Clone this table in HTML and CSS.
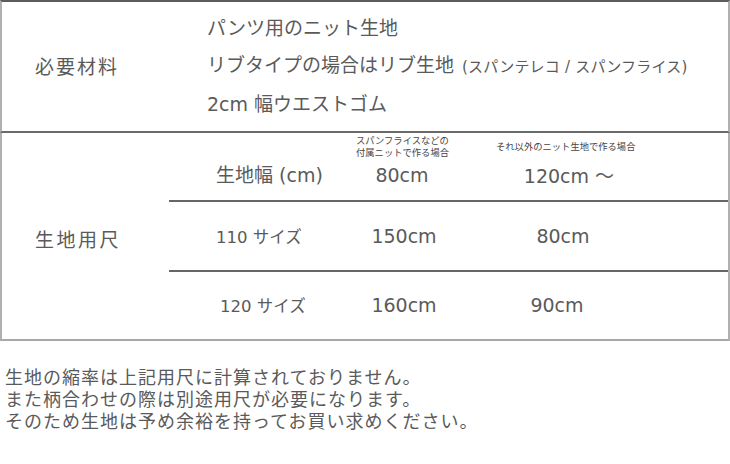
FILE: index.html
```html
<!DOCTYPE html>
<html lang="ja">
<head>
<meta charset="utf-8">
<link rel="stylesheet" href="styles.css">
</head>
<body>
<div class="spec">
  <section class="materials">
    <div class="label">必要材料</div>
    <ul class="list">
      <li>パンツ用のニット生地</li>
      <li>リブタイプの場合はリブ生地<span class="sub">(スパンテレコ / スパンフライス)</span></li>
      <li>2cm 幅ウエストゴム</li>
    </ul>
  </section>
  <section class="sizes">
    <div class="label">生地用尺</div>
    <div class="rows">
      <div class="row head">
        <span class="note note-a">スパンフライスなどの<br>付属ニットで作る場合</span>
        <span class="note note-b">それ以外のニット生地で作る場合</span>
        <div class="c1">生地幅 (cm)</div>
        <div class="c2">80cm</div>
        <div class="c3 shift-r">120cm ～</div>
      </div>
      <div class="row">
        <div class="c1 size">110 サイズ</div>
        <div class="c2">150cm</div>
        <div class="c3">80cm</div>
      </div>
      <div class="row">
        <div class="c1 size shift-b">120 サイズ</div>
        <div class="c2">160cm</div>
        <div class="c3 shift-l">90cm</div>
      </div>
    </div>
  </section>
  <p class="footnote">生地の縮率は上記用尺に計算されておりません。<br>また柄合わせの際は別途用尺が必要になります。<br>そのため生地は予め余裕を持ってお買い求めください。</p>
</div>
</body>
</html>
```
FILE: styles.css
```css
* { box-sizing: border-box; }
html, body { margin: 0; padding: 0; background: #fff; }
body {
  width: 730px;
  font-family: "DejaVu Sans", "Noto Sans CJK JP", sans-serif;
  color: #5a5a5a;
}
.spec { width: 730px; }

.materials {
  display: flex;
  height: 133px;
  border-top: 2px solid #5c5c5c;
  border-left: 2px solid #b0b0b0;
  border-right: 2px solid #b0b0b0;
  border-bottom: 2px solid #6a6a6a;
}
.label {
  width: 167px;
  padding-left: 33px;
  font-family: "Noto Sans CJK JP", sans-serif;
  font-size: 19px;
  letter-spacing: 2px;
  display: flex;
  align-items: center;
}
.materials .label { padding-bottom: 3px; }
.list {
  list-style: none;
  margin: 0;
  padding: 8px 0 0 38px;
  font-size: 19px;
  line-height: 37px;
}
.list li { white-space: nowrap; }
.sub { font-size: 15px; margin-left: 8px; letter-spacing: 0.2px; }

.sizes {
  display: flex;
  height: 208px;
  border-left: 2px solid #b0b0b0;
  border-right: 2px solid #b0b0b0;
  border-bottom: 2px solid #a8a8a8;
}
.sizes .label {
  padding-top: 4px;
  letter-spacing: 2.5px;
}
.rows { flex: 1; display: flex; flex-direction: column; }
.row {
  height: 68px;
  display: grid;
  grid-template-columns: 172px 130px 184px;
  align-items: center;
  font-size: 19px;
}
.row.head { position: relative; }
.row + .row { border-top: 2px solid #666; height: 70px; }
.c1 { padding-left: 47px; white-space: nowrap; }
.c2, .c3 { text-align: center; white-space: nowrap; }
.c2 { padding-right: 4px; }
.head .c1 { padding-top: 13px; }
.head .c2, .head .c3 { padding-top: 16px; }
.head .c2 { padding-right: 8px; }
.size { font-size: 16.5px; }
.shift-b { padding-left: 51px; }
.shift-r { padding-left: 12px; }
.shift-l { padding-right: 12px; }
.note {
  position: absolute;
  font-family: "Noto Sans CJK JP", sans-serif;
  font-size: 9.3px;
  line-height: 11.5px;
  color: #444;
  white-space: nowrap;
}
.note-a { left: 187px; top: 2px; }
.note-b { left: 327px; top: 8px; }

.footnote {
  margin: 24px 0 0 5px;
  font-family: "Noto Sans CJK JP", sans-serif;
  font-size: 18px;
  line-height: 22px;
  color: #5a5a5a;
  letter-spacing: 1px;
}
```
